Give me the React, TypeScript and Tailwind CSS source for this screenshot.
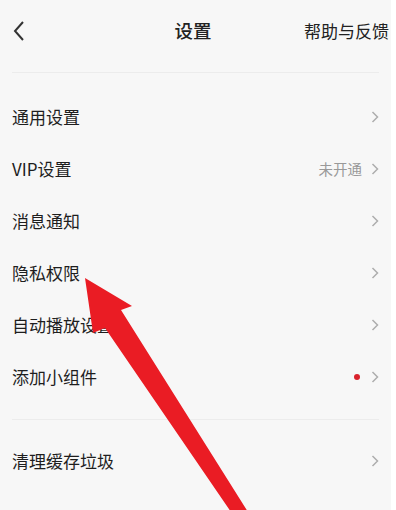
const font = {
  fontFamily: '"Noto Sans CJK SC", "Noto Sans", sans-serif',
};

function Chevron() {
  return (
    <svg width="8" height="14" viewBox="0 0 8 14" className="shrink-0">
      <path d="M1.5 2 L6.5 7 L1.5 12" fill="none" stroke="#adadad" strokeWidth="1.5" />
    </svg>
  );
}

function Row({ label, extra, dot }: { label: string; extra?: string; dot?: boolean }) {
  return (
    <div className="flex h-[52px] items-center justify-between pl-3 pr-[12px]">
      <span className="text-[17px] text-[#1e1e1e]">{label}</span>
      <div className="flex items-center gap-[9px]">
        {extra && <span className="text-[14.5px] text-[#999]">{extra}</span>}
        {dot && <span className="mr-[2px] h-[6px] w-[6px] rounded-full bg-[#d9232d]" />}
        <Chevron />
      </div>
    </div>
  );
}

export default function App() {
  return (
    <div className="relative flex h-[510px] w-[396px] overflow-hidden bg-white" style={font}>
      <div className="w-[391px] bg-[#f7f7f7]">
        {/* header */}
        <div className="flex h-[62px] items-center justify-between pl-3 pr-[2px]">
          <svg width="14" height="22" viewBox="0 0 14 22">
            <path d="M11 2 L3 11 L11 20" fill="none" stroke="#333" strokeWidth="2" />
          </svg>
          <span className="ml-[56px] text-[18.5px] font-medium text-[#222]">设置</span>
          <span className="text-[17px] text-[#222]">帮助与反馈</span>
        </div>
        <div className="mx-3 mt-[10px] h-px bg-[#ececec]" />

        <div className="pt-[18px]">
          <Row label="通用设置" />
          <Row label="VIP设置" extra="未开通" />
          <Row label="消息通知" />
          <Row label="隐私权限" />
          <Row label="自动播放设置" />
          <Row label="添加小组件" dot />
        </div>
        <div className="mx-3 mt-4 h-px bg-[#ececec]" />
        <div className="pt-[15px]">
          <Row label="清理缓存垃圾" />
        </div>
      </div>

      {/* red annotation arrow */}
      <svg className="pointer-events-none absolute left-0 top-0" width="396" height="510" viewBox="0 0 396 510">
        <polygon
          points="85,278 132,306 121,310 248,512 231,512 105,328 93,333"
          fill="#ea1c24"
        />
      </svg>
    </div>
  );
}
